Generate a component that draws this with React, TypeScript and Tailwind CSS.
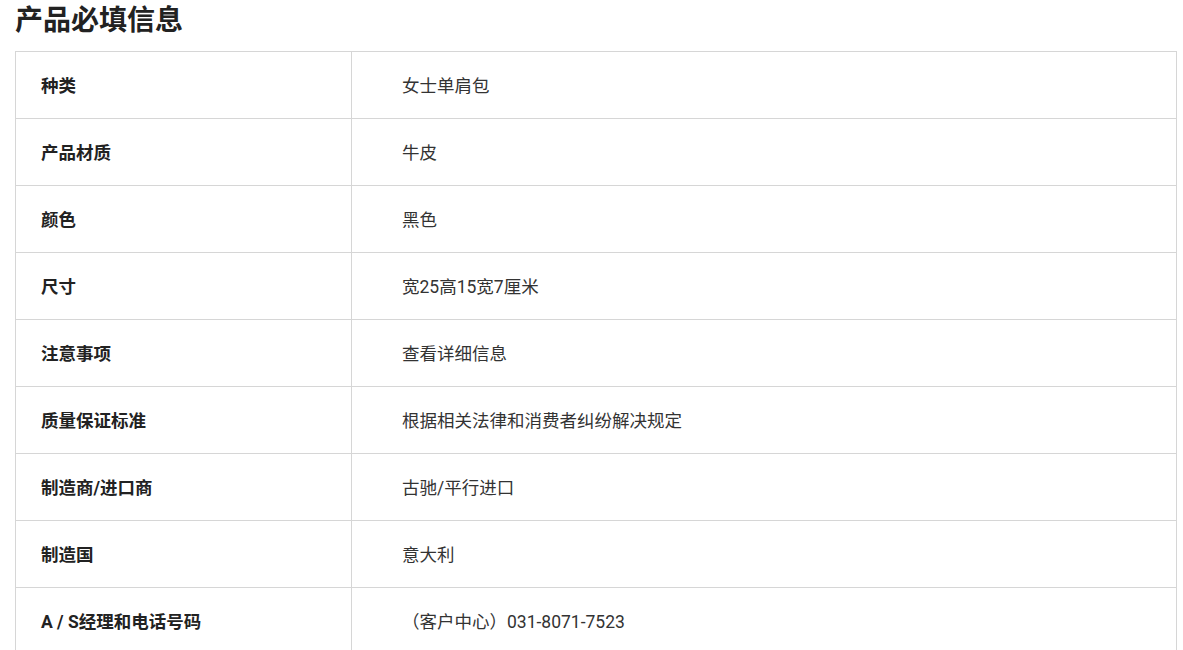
const rows: [string, string][] = [
  ["种类", "女士单肩包"],
  ["产品材质", "牛皮"],
  ["颜色", "黑色"],
  ["尺寸", "宽25高15宽7厘米"],
  ["注意事项", "查看详细信息"],
  ["质量保证标准", "根据相关法律和消费者纠纷解决规定"],
  ["制造商/进口商", "古驰/平行进口"],
  ["制造国", "意大利"],
  ["A / S经理和电话号码", "（客户中心）031-8071-7523"],
];

export default function App() {
  return (
    <div className="min-h-[650px] bg-white px-[15px] font-['Roboto','Noto_Sans_CJK_SC',sans-serif] text-[#333]">
      <div className="flex h-[51px] items-center pb-[9px]">
        <h2 className="text-[28px] font-bold leading-none text-[#222]">产品必填信息</h2>
      </div>
      <table className="w-[1162px] border-collapse text-[17.5px]">
        <tbody>
          {rows.map(([k, v]) => (
            <tr key={k} className="h-[67px]">
              <th className="w-[336px] border border-[#d6d6d6] px-[25px] pt-[3px] text-left font-bold text-[#222]">{k}</th>
              <td className="border border-[#d6d6d6] pl-[50px] pt-[3px]">{v}</td>
            </tr>
          ))}
        </tbody>
      </table>
    </div>
  );
}
